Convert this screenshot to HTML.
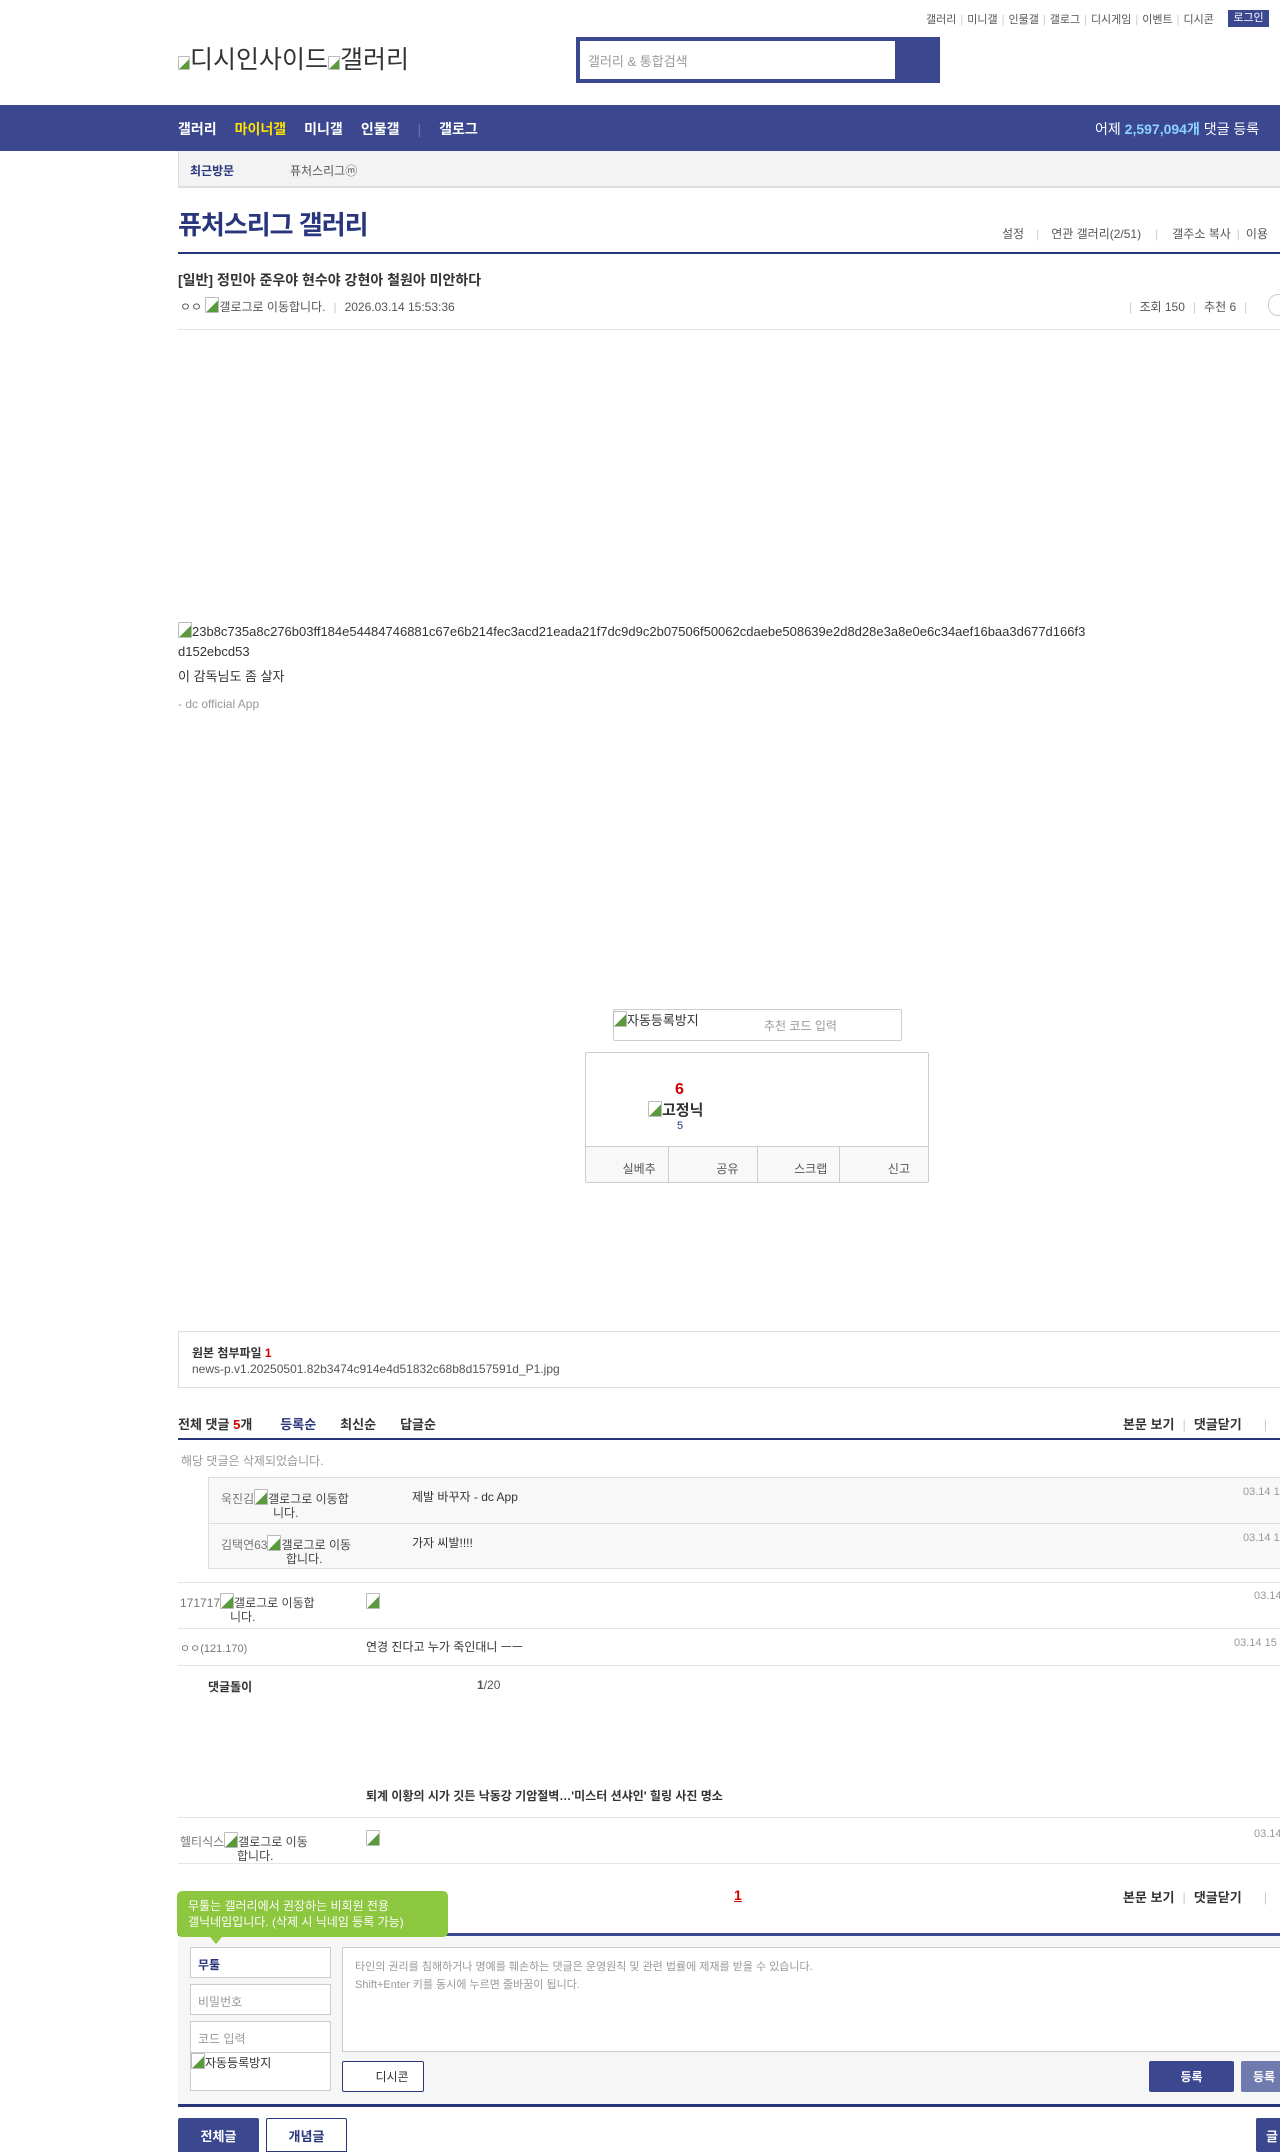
<!DOCTYPE html>
<html><head><meta charset="utf-8">
<style>
*{margin:0;padding:0;box-sizing:border-box}
body{width:1280px;height:2150px;overflow:hidden;position:relative;background:#fff;font-family:"Liberation Sans","Noto Sans CJK KR",sans-serif;font-size:12px;color:#333}
.a{position:absolute;white-space:nowrap}
.sep{color:#ccc;margin:0 4px}
.img{display:inline-block;width:14px;height:16px;vertical-align:-2px;border:1px solid #bbb;border-radius:1px;background:linear-gradient(135deg,#fff 55%,#5a9a3a 56%)}
.hl{position:absolute;height:1px;background:#e6e6e6}
.btn{position:absolute;display:flex;align-items:center;justify-content:center;font-weight:bold;font-size:13px}
</style></head><body>

<div class="a" style="left:926px;top:11px;font-size:11px;color:#555">갤러리<span class="sep">|</span>미니갤<span class="sep">|</span>인물갤<span class="sep">|</span>갤로그<span class="sep">|</span>디시게임<span class="sep">|</span>이벤트<span class="sep">|</span>디시콘</div>
<div class="a" style="left:1228px;top:10px;width:41px;height:17px;background:#3b4890;color:#fff;font-size:11px;text-align:center;line-height:17px">로그인</div>

<div class="a" style="left:178px;top:40px;font-size:25px;color:#333"><span class="img" style="width:12px;height:14px"></span>디시인사이드<span class="img" style="width:12px;height:14px"></span>갤러리</div>
<div class="a" style="left:576px;top:37px;width:364px;height:46px;background:#3b4890"></div>
<div class="a" style="left:580px;top:41px;width:315px;height:38px;background:#fff;color:#999;font-size:13px;padding:10px 8px">갤러리 &amp; 통합검색</div>

<div class="a" style="left:0;top:105px;width:1280px;height:46px;background:#3b4890"></div>
<div class="a" style="left:178px;top:119px;font-size:14px;font-weight:bold;color:#fff">갤러리<span style="color:#ffe200;margin-left:18px">마이너갤</span><span style="margin-left:18px">미니갤</span><span style="margin-left:18px">인물갤</span><span style="color:#6c77b0;margin:0 18px;font-weight:normal">|</span>갤로그</div>
<div class="a" style="left:1095px;top:119px;font-size:14px;color:#fff">어제 <b style="color:#8dd3ff">2,597,094개</b> 댓글 등록</div>

<div class="a" style="left:178px;top:151px;width:1102px;height:37px;background:#f3f3f3;border-left:1px solid #ddd;border-bottom:2px solid #ddd"></div>
<div class="a" style="left:190px;top:162px;font-size:12px;font-weight:bold;color:#29367c">최근방문</div>
<div class="a" style="left:290px;top:162px;font-size:12px;color:#555">퓨처스리그ⓜ</div>

<div class="a" style="left:178px;top:205px;font-size:26px;font-weight:bold;color:#29367c;letter-spacing:-1px">퓨처스리그 갤러리</div>
<div class="a" style="left:1002px;top:225px;font-size:12px;color:#555">설정<span class="sep" style="margin:0 12px">|</span>연관 갤러리(2/51)<span class="sep" style="margin:0 14px">|</span>갤주소 복사<span class="sep" style="margin:0 6px">|</span>이용</div>
<div class="a" style="left:178px;top:252px;width:1102px;height:2px;background:#29367c"></div>

<div class="a" style="left:178px;top:270px;font-size:14px;font-weight:bold;color:#333">[일반] 정민아 준우야 현수야 강현아 철원아 미안하다</div>
<div class="a" style="left:180px;top:297px;font-size:12px;color:#555">ㅇㅇ <span class="img"></span>갤로그로 이동합니다.<span class="sep" style="margin:0 8px">|</span>2026.03.14 15:53:36</div>
<div class="a" style="left:1125px;top:298px;font-size:12px;color:#555"><span class="sep">|</span> 조회 150<span class="sep" style="margin:0 8px">|</span>추천 6<span class="sep" style="margin:0 8px">|</span></div>
<div class="a" style="left:1268px;top:294px;width:20px;height:22px;border:1px solid #ccc;border-radius:11px"></div>
<div class="hl" style="left:178px;top:329px;width:1102px"></div>

<div class="a" style="left:178px;top:622px;font-size:13px;color:#333;line-height:20px;white-space:normal;width:910px;word-break:break-all"><span class="img"></span>23b8c735a8c276b03ff184e54484746881c67e6b214fec3acd21eada21f7dc9d9c2b07506f50062cdaebe508639e2d8d28e3a8e0e6c34aef16baa3d677d166f3d152ebcd53</div>
<div class="a" style="left:178px;top:666px;font-size:13px;color:#333">이 감독님도 좀 살자</div>
<div class="a" style="left:178px;top:697px;font-size:12px;color:#999">- dc official App</div>

<div class="a" style="left:613px;top:1009px;width:289px;height:32px;border:1px solid #ccc;border-radius:2px"></div>
<div class="a" style="left:613px;top:1010px;font-size:13px;color:#333"><span class="img"></span>자동등록방지</div>
<div class="a" style="left:764px;top:1017px;font-size:12px;color:#999">추천 코드 입력</div>

<div class="a" style="left:585px;top:1052px;width:344px;height:131px;border:1px solid #ccc;border-radius:2px"></div>
<div class="a" style="left:675px;top:1081px;font-size:16px;font-weight:bold;color:#c00">6</div>
<div class="a" style="left:648px;top:1099px;font-size:15px;font-weight:bold;color:#333"><span class="img"></span>고정닉</div>
<div class="a" style="left:677px;top:1120px;font-size:11px;color:#29367c">5</div>
<div class="a" style="left:586px;top:1146px;width:342px;height:36px;background:#f8f8f8;border-top:1px solid #ccc;display:flex">
<div style="flex:1;border-right:1px solid #ccc;text-align:right;padding:13px 12px 0 0;font-size:12px;color:#555">실베추</div>
<div style="flex:1;border-right:1px solid #ccc;text-align:right;padding:13px 18px 0 0;font-size:12px;color:#555">공유</div>
<div style="flex:1;border-right:1px solid #ccc;text-align:right;padding:13px 12px 0 0;font-size:12px;color:#555">스크랩</div>
<div style="flex:1;text-align:right;padding:13px 18px 0 0;font-size:12px;color:#555">신고</div></div>

<div class="a" style="left:178px;top:1331px;width:1102px;height:57px;border:1px solid #ddd;border-right:0"></div>
<div class="a" style="left:192px;top:1344px;font-size:12px;font-weight:bold;color:#333">원본 첨부파일 <span style="color:#c00">1</span></div>
<div class="a" style="left:192px;top:1362px;font-size:12px;color:#555">news-p.v1.20250501.82b3474c914e4d51832c68b8d157591d_P1.jpg</div>

<div class="a" style="left:178px;top:1414px;font-size:13px;font-weight:bold;color:#333">전체 댓글 <span style="color:#c00">5</span>개<span style="color:#29367c;margin-left:28px">등록순</span><span style="margin-left:24px">최신순</span><span style="margin-left:24px">답글순</span></div>
<div class="a" style="left:1123px;top:1414px;font-size:13px;font-weight:bold;color:#333">본문 보기<span class="sep" style="font-weight:normal;margin:0 8px">|</span>댓글닫기<span class="sep" style="font-weight:normal;margin-left:22px">|</span></div>
<div class="a" style="left:178px;top:1438px;width:1102px;height:2px;background:#29367c"></div>

<div class="a" style="left:181px;top:1452px;font-size:12px;color:#999">해당 댓글은 삭제되었습니다.</div>
<div class="a" style="left:208px;top:1477px;width:1072px;height:92px;background:#f8f8f8;border:1px solid #ddd;border-right:0"></div>
<div class="hl" style="left:209px;top:1523px;width:1071px;background:#ddd"></div>
<div class="a" style="left:221px;top:1489px;font-size:12px;color:#777;line-height:14px">욱진김<span class="img"></span><span style="color:#444">갤로그로 이동합</span><br><span style="margin-left:52px;color:#444">니다.</span></div>
<div class="a" style="left:412px;top:1488px;font-size:12px;color:#333">제발 바꾸자 - dc App</div>
<div class="a" style="left:1243px;top:1486px;font-size:11px;color:#999">03.14 1</div>
<div class="a" style="left:221px;top:1535px;font-size:12px;color:#777;line-height:14px">김택연63<span class="img"></span><span style="color:#444">갤로그로 이동</span><br><span style="margin-left:65px;color:#444">합니다.</span></div>
<div class="a" style="left:412px;top:1534px;font-size:12px;color:#333">가자 씨발!!!!</div>
<div class="a" style="left:1243px;top:1532px;font-size:11px;color:#999">03.14 1</div>

<div class="hl" style="left:178px;top:1582px;width:1102px"></div>
<div class="a" style="left:180px;top:1593px;font-size:12px;color:#777;line-height:14px">171717<span class="img"></span><span style="color:#444">갤로그로 이동합</span><br><span style="margin-left:50px;color:#444">니다.</span></div>
<div class="a" style="left:366px;top:1593px"><span class="img"></span></div>
<div class="a" style="left:1254px;top:1590px;font-size:11px;color:#999">03.14</div>
<div class="hl" style="left:178px;top:1628px;width:1102px"></div>
<div class="a" style="left:180px;top:1640px;font-size:11px;color:#777">ㅇㅇ(121.170)</div>
<div class="a" style="left:366px;top:1638px;font-size:12px;color:#333">연경 진다고 누가 죽인대니 ㅡㅡ</div>
<div class="a" style="left:1234px;top:1637px;font-size:11px;color:#999">03.14 15</div>
<div class="hl" style="left:178px;top:1665px;width:1102px"></div>
<div class="a" style="left:208px;top:1678px;font-size:12px;font-weight:bold;color:#333">댓글돌이</div>
<div class="a" style="left:477px;top:1678px;font-size:12px;color:#555"><b>1</b>/20</div>

<div class="a" style="left:366px;top:1787px;font-size:12px;font-weight:bold;color:#333">퇴계 이황의 시가 깃든 낙동강 기암절벽…'미스터 션샤인' 힐링 사진 명소</div>
<div class="hl" style="left:178px;top:1817px;width:1102px"></div>
<div class="a" style="left:180px;top:1832px;font-size:12px;color:#777;line-height:14px">헬티식스<span class="img"></span><span style="color:#444">갤로그로 이동</span><br><span style="margin-left:57px;color:#444">합니다.</span></div>
<div class="a" style="left:366px;top:1830px"><span class="img"></span></div>
<div class="a" style="left:1254px;top:1828px;font-size:11px;color:#999">03.14</div>
<div class="hl" style="left:178px;top:1863px;width:1102px"></div>

<div class="a" style="left:734px;top:1887px;font-size:14px;font-weight:bold;color:#c00;text-decoration:underline">1</div>
<div class="a" style="left:1123px;top:1887px;font-size:13px;font-weight:bold;color:#333">본문 보기<span class="sep" style="font-weight:normal;margin:0 8px">|</span>댓글닫기<span class="sep" style="font-weight:normal;margin-left:22px">|</span></div>

<div class="a" style="left:178px;top:1933px;width:1102px;height:174px;background:#f6f6f6;border-top:3px solid #3b4890;border-bottom:3px solid #29367c"></div>
<div class="a" style="left:177px;top:1891px;width:271px;height:46px;background:#8dc63f;border-radius:5px;color:#fff;font-size:12px;line-height:16px;padding:7px 11px">무툴는 갤러리에서 권장하는 비회원 전용<br>갤닉네임입니다. (삭제 시 닉네임 등록 가능)</div>
<div class="a" style="left:210px;top:1937px;width:0;height:0;border-left:6px solid transparent;border-right:6px solid transparent;border-top:7px solid #8dc63f"></div>

<div class="a" style="left:190px;top:1947px;width:141px;height:31px;background:#fff;border:1px solid #ccc;font-size:12px;font-weight:bold;color:#29367c;padding:8px 7px">무툴</div>
<div class="a" style="left:190px;top:1984px;width:141px;height:31px;background:#fff;border:1px solid #ccc;font-size:12px;color:#999;padding:8px 7px">비밀번호</div>
<div class="a" style="left:190px;top:2021px;width:141px;height:70px;background:#fff;border:1px solid #ccc;font-size:12px;color:#999;padding:8px 7px">코드 입력</div>
<div class="a" style="left:190px;top:2052px;width:141px;height:1px;background:#ccc"></div>
<div class="a" style="left:191px;top:2053px;font-size:12px;color:#333"><span class="img"></span>자동등록방지</div>

<div class="a" style="left:342px;top:1947px;width:938px;height:105px;background:#fff;border:1px solid #ccc;border-right:0;font-size:11px;color:#999;line-height:18px;padding:10px 12px">타인의 권리를 침해하거나 명예를 훼손하는 댓글은 운영원칙 및 관련 법률에 제재를 받을 수 있습니다.<br>Shift+Enter 키를 동시에 누르면 줄바꿈이 됩니다.</div>
<div class="btn" style="left:342px;top:2061px;width:82px;height:31px;background:#fff;border:1px solid #29367c;border-radius:2px;font-weight:normal;font-size:12px;color:#333;padding-left:18px">디시콘</div>
<div class="btn" style="left:1149px;top:2061px;width:85px;height:31px;background:#3b4890;border-radius:2px;color:#fff;font-size:12px">등록</div>
<div class="btn" style="left:1241px;top:2061px;width:60px;height:31px;background:#6f7aaf;border-radius:2px;color:#fff;font-size:12px;justify-content:flex-start;padding-left:12px">등록</div>

<div class="btn" style="left:178px;top:2118px;width:81px;height:34px;background:#3b4890;border-radius:2px 2px 0 0;color:#fff">전체글</div>
<div class="btn" style="left:266px;top:2118px;width:81px;height:34px;background:#fff;border:1px solid #29367c;border-radius:2px 2px 0 0;color:#29367c">개념글</div>
<div class="btn" style="left:1256px;top:2118px;width:40px;height:34px;background:#3b4890;border-radius:2px;color:#fff;justify-content:flex-start;padding-left:10px">글</div>
</body></html>
